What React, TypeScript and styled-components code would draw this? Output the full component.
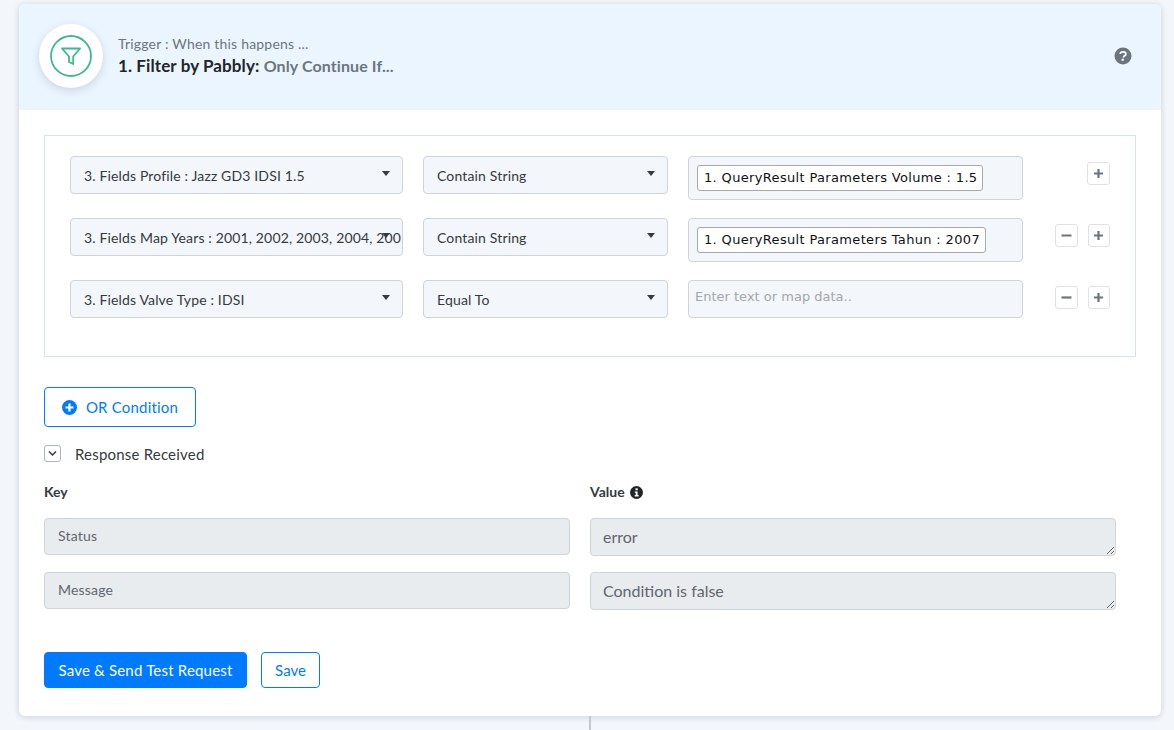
import React from "react";
import styled, { createGlobalStyle } from "styled-components";

const Global = createGlobalStyle`
  html, body { margin: 0; padding: 0; background: #f3f6fa; }
  body { font-family: "Lato", "Noto Sans", sans-serif; color: #212529; }
  * { box-sizing: border-box; }
`;

const Page = styled.div`
  width: 1174px;
  height: 730px;
  overflow: hidden;
  padding: 4px 13px 0 19px;
  display: flex;
  flex-direction: column;
  align-items: stretch;
`;
const Card = styled.section`
  height: 712px;
  flex: none;
  background: #fff;
  border-radius: 6px;
  box-shadow: 0 1px 6px rgba(40, 60, 90, 0.2);
  overflow: hidden;
`;
const Connector = styled.div`
  width: 2px;
  height: 14px;
  margin-left: 570px;
  background: #c4c8cc;
  flex: none;
`;
const Header = styled.header`
  height: 106px;
  background: #ebf5ff;
  display: flex;
  align-items: center;
  padding: 0 29px 2px 20px;
`;
const IconCircle = styled.div`
  width: 64px;
  height: 64px;
  border-radius: 50%;
  background: #fff;
  box-shadow: 0 3px 8px rgba(40, 60, 90, 0.16);
  display: flex;
  align-items: center;
  justify-content: center;
  flex: none;
`;
const HeaderText = styled.div`
  margin-left: 15px;
  flex: 1;
  display: flex;
  flex-direction: column;
`;
const Eyebrow = styled.div`
  font-size: 14px;
  line-height: 20px;
  color: #6c757d;
  letter-spacing: 0.2px;
`;
const Title = styled.div`
  font-size: 17px;
  line-height: 24px;
  font-weight: 700;
  color: #212529;
  letter-spacing: 0.1px;
`;
const TitleNote = styled.span`
  font-size: 16px;
  color: #6c757d;
`;
const Body = styled.div`
  padding: 25px 25px 0;
`;
const ConditionBox = styled.div`
  height: 222px;
  border: 1px solid #d3e3f5;
  padding: 20px 25px 0;
  display: flex;
  flex-direction: column;
  gap: 18px;
`;
const Row = styled.div`
  display: flex;
  align-items: flex-start;
`;
const Select = styled.div<{ $w: number }>`
  width: ${(p) => p.$w}px;
  height: 38px;
  flex: none;
  margin-right: 20px;
  background: #f3f6fa;
  border: 1px solid #ced4da;
  border-radius: 4px;
  padding: 0 34px 0 13px;
  font-size: 14px;
  line-height: 38px;
  color: #343a40;
  letter-spacing: 0.15px;
  white-space: nowrap;
  overflow: hidden;
  position: relative;
  &::after {
    content: "";
    position: absolute;
    right: 12px;
    top: 14px;
    border-left: 4.5px solid transparent;
    border-right: 4.5px solid transparent;
    border-top: 5px solid #343a40;
  }
`;
const MapField = styled.div<{ $empty?: boolean }>`
  width: 335px;
  height: ${(p) => (p.$empty ? 38 : 44)}px;
  flex: none;
  background: #f3f6fa;
  border: 1px solid #ced4da;
  border-radius: 4px;
  padding: 8px;
  display: flex;
  align-items: flex-start;
  font-family: "DejaVu Sans", sans-serif;
  font-size: 13px;
`;
const Chip = styled.span`
  height: 26px;
  background: #fff;
  border: 1px solid #a9a9a9;
  border-radius: 3px;
  padding: 0 5px 0 6px;
  line-height: 24px;
  color: #111;
  letter-spacing: 0.34px;
  white-space: nowrap;
`;
const Placeholder = styled.span`
  margin: -2px 0 0 -2px;
  line-height: 20px;
  color: #a3a7ab;
`;
const Actions = styled.div`
  margin-left: 32px;
  margin-top: 6px;
  width: 55px;
  display: flex;
  justify-content: flex-end;
  gap: 10px;
  flex: none;
`;
const SquareBtn = styled.button`
  width: 23px;
  height: 23px;
  padding: 0;
  background: #fff;
  border: 1px solid #dee2e6;
  border-radius: 3px;
  display: flex;
  align-items: center;
  justify-content: center;
`;
const OrButton = styled.button`
  margin-top: 30px;
  width: 152px;
  height: 40px;
  background: #fff;
  border: 1px solid #007bff;
  border-radius: 4px;
  color: #007bff;
  font-family: inherit;
  font-size: 15px;
  letter-spacing: 0.2px;
  display: flex;
  align-items: center;
  justify-content: center;
  gap: 9px;
  padding: 0;
`;
const ResponseRow = styled.div`
  margin-top: 18px;
  height: 17px;
  display: flex;
  align-items: center;
  gap: 14px;
  font-size: 15px;
  color: #343a40;
  letter-spacing: 0.2px;
`;
const CheckBox = styled.span`
  width: 17px;
  height: 17px;
  border: 1px solid #adb5bd;
  border-radius: 3px;
  display: flex;
  align-items: center;
  justify-content: center;
`;
const FieldGrid = styled.div`
  margin-top: 20px;
  width: 1072px;
  display: grid;
  grid-template-columns: 526px 526px;
  column-gap: 20px;
  grid-template-rows: 20px 38px 38px;
  row-gap: 16px;
  align-items: start;
`;
const FieldLabel = styled.div`
  font-size: 14px;
  line-height: 20px;
  font-weight: 700;
  color: #343a40;
  display: flex;
  align-items: center;
  gap: 5px;
`;
const KeyInput = styled.div`
  height: 37px;
  background: #e9ecef;
  border: 1px solid #ced4da;
  border-radius: 4px;
  padding: 0 13px;
  font-size: 14px;
  line-height: 34px;
  color: #5f666d;
  letter-spacing: 0.2px;
`;
const ValueArea = styled.textarea`
  display: block;
  width: 526px;
  height: 38px;
  background: #e9ecef;
  border: 1px solid #ced4da;
  border-radius: 4px;
  padding: 7px 12px;
  font-family: inherit;
  font-size: 16px;
  line-height: 22px;
  color: #5f666d;
  outline: none;
  overflow: hidden;
`;
const Footer = styled.div`
  margin-top: 42px;
  display: flex;
  gap: 14px;
  align-items: flex-start;
`;
const PrimaryBtn = styled.button`
  width: 203px;
  height: 36px;
  background: #007bff;
  border: 1px solid #007bff;
  border-radius: 4px;
  color: #fff;
  font-family: inherit;
  font-size: 15px;
  letter-spacing: 0.2px;
  padding: 0;
`;
const OutlineBtn = styled.button`
  width: 59px;
  height: 36px;
  background: #fff;
  border: 1px solid #007bff;
  border-radius: 4px;
  color: #007bff;
  font-family: inherit;
  font-size: 15px;
  padding: 0;
`;

const FilterIcon = () => (
  <svg width="42" height="42" viewBox="0 0 42 42" fill="none" stroke="#3dba8a">
    <circle cx="21" cy="21" r="20" strokeWidth="1.8" />
    <path
      d="M12 13.5h18l-6.8 8v7.5l-4.2-2v-5.500z"
      strokeWidth="1.8"
      strokeLinejoin="round"
    />
  </svg>
);
const Plus = () => (
  <svg width="11" height="11" viewBox="0 0 11 11">
    <path d="M5.500 1v9M1 5.500h9" stroke="#6c757d" strokeWidth="2.200" />
  </svg>
);
const Minus = () => (
  <svg width="11" height="11" viewBox="0 0 11 11">
    <path d="M0.500 5.500h10" stroke="#6c757d" strokeWidth="2.200" />
  </svg>
);
const QuestionIcon = () => (
  <svg width="18" height="18" viewBox="0 0 18 18">
    <circle cx="9" cy="9" r="8.500" fill="#6c757d" />
    <path
      d="M6.200 7c.2-1.500 1.400-2.200 2.900-2.200 1.600 0 2.800.9 2.800 2.200 0 1.900-2.400 1.800-2.400 3.400"
      stroke="#fff"
      strokeWidth="1.800"
      fill="none"
    />
    <rect x="7.600" y="11.700" width="2.200" height="2.100" fill="#fff" />
  </svg>
);
const PlusCircle = () => (
  <svg width="15" height="15" viewBox="0 0 15 15">
    <circle cx="7.500" cy="7.500" r="7.500" fill="#007bff" />
    <path d="M7.500 3.500v8M3.500 7.500h8" stroke="#fff" strokeWidth="2.200" />
  </svg>
);
const Chevron = () => (
  <svg width="9" height="7" viewBox="0 0 9 7" fill="none">
    <path d="M1 1.500l3.500 3.500L8 1.500" stroke="#343a40" strokeWidth="1.500" />
  </svg>
);
const InfoIcon = () => (
  <svg width="13" height="13" viewBox="0 0 13 13">
    <circle cx="6.500" cy="6.500" r="6.500" fill="#212529" />
    <rect x="5.500" y="2.300" width="2.200" height="2" fill="#fff" />
    <path d="M4.800 5.500h2.800v3.600h1v1.300H4.700V9.100h1V6.800h-.9z" fill="#fff" />
  </svg>
);

const rows = [
  { field: "3. Fields Profile : Jazz GD3 IDSI 1.5", op: "Contain String", chip: "1. QueryResult Parameters Volume : 1.5", minus: false },
  { field: "3. Fields Map Years : 2001, 2002, 2003, 2004, 2005, 2006", op: "Contain String", chip: "1. QueryResult Parameters Tahun : 2007", minus: true },
  { field: "3. Fields Valve Type : IDSI", op: "Equal To", chip: "", minus: true },
];

export default function App() {
  return (
    <Page>
      <Global />
      <Card>
        <Header>
          <IconCircle>
            <FilterIcon />
          </IconCircle>
          <HeaderText>
            <Eyebrow>Trigger : When this happens ...</Eyebrow>
            <Title>
              1. Filter by Pabbly: <TitleNote>Only Continue If...</TitleNote>
            </Title>
          </HeaderText>
          <QuestionIcon />
        </Header>
        <Body>
          <ConditionBox>
            {rows.map((r) => (
              <Row key={r.field}>
                <Select $w={333}>{r.field}</Select>
                <Select $w={245}>{r.op}</Select>
                <MapField $empty={!r.chip}>
                  {r.chip ? <Chip>{r.chip}</Chip> : <Placeholder>Enter text or map data..</Placeholder>}
                </MapField>
                <Actions>
                  {r.minus && (
                    <SquareBtn aria-label="Remove">
                      <Minus />
                    </SquareBtn>
                  )}
                  <SquareBtn aria-label="Add">
                    <Plus />
                  </SquareBtn>
                </Actions>
              </Row>
            ))}
          </ConditionBox>
          <OrButton>
            <PlusCircle />
            OR Condition
          </OrButton>
          <ResponseRow>
            <CheckBox>
              <Chevron />
            </CheckBox>
            Response Received
          </ResponseRow>
          <FieldGrid>
            <FieldLabel>Key</FieldLabel>
            <FieldLabel>
              Value <InfoIcon />
            </FieldLabel>
            <KeyInput>Status</KeyInput>
            <ValueArea readOnly defaultValue="error" />
            <KeyInput>Message</KeyInput>
            <ValueArea readOnly defaultValue="Condition is false" />
          </FieldGrid>
          <Footer>
            <PrimaryBtn>Save &amp; Send Test Request</PrimaryBtn>
            <OutlineBtn>Save</OutlineBtn>
          </Footer>
        </Body>
      </Card>
      <Connector />
    </Page>
  );
}
